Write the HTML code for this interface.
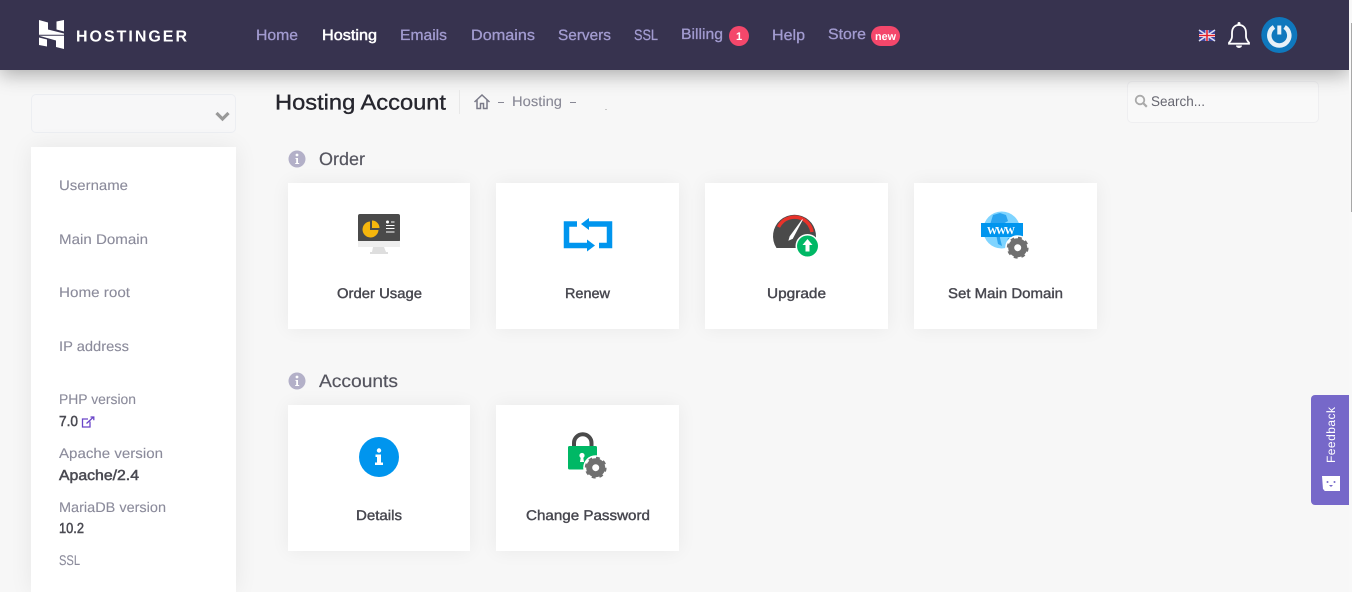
<!DOCTYPE html>
<html lang="en"><head><meta charset="utf-8"><title>Hosting Account</title>
<style>
html,body{margin:0;padding:0;width:1352px;height:592px;overflow:hidden;background:#f7f7f7}
.b{position:absolute;box-sizing:border-box}
.card{background:#fff;box-shadow:0 0 18px rgba(0,0,0,.06)}
svg{position:absolute;left:0;top:0;text-rendering:geometricPrecision}
text{font-family:"Liberation Sans",sans-serif}
.nav{font-size:15px;fill:#a29bd0;stroke:#a29bd0;stroke-width:.3}
.side{font-size:14px;fill:#8b8b9b;stroke:#8b8b9b;stroke-width:.1}
.val{font-size:14.500px;fill:#4a4a52;stroke:#4a4a52;stroke-width:.5}
.lab{font-size:14px;fill:#47474f;stroke:#47474f;stroke-width:.4}
.sec{font-size:18px;fill:#55555f;stroke:#55555f;stroke-width:.2}
</style></head><body>
<div class="b" style="left:31px;top:94px;width:205px;height:39px;border:1px solid #eceef2;border-radius:5px;background:#f7f7f8"></div>
<div class="b card" style="left:31px;top:147px;width:205px;height:445px;box-shadow:0 0 22px rgba(0,0,0,.07)"></div>
<div class="b" style="left:1127px;top:81px;width:192px;height:42px;border:1px solid #efeff1;border-radius:5px;background:#f9f9f9"></div>
<div class="b card" style="left:288px;top:183px;width:182px;height:146px"></div>
<div class="b card" style="left:496px;top:183px;width:183px;height:146px"></div>
<div class="b card" style="left:705px;top:183px;width:183px;height:146px"></div>
<div class="b card" style="left:914px;top:183px;width:183px;height:146px"></div>
<div class="b card" style="left:288px;top:405px;width:182px;height:146px"></div>
<div class="b card" style="left:496px;top:405px;width:183px;height:146px"></div>
<div class="b" style="left:0;top:0;width:1349px;height:70px;background:#37334f;box-shadow:0 5px 18px rgba(0,0,0,.3)"></div>
<div class="b" style="left:1349px;top:0;width:3px;height:592px;background:#f8f8f8"></div>
<div class="b" style="left:1351px;top:23px;width:1px;height:189px;background:#a8a8a8"></div>
<div class="b" style="left:1311px;top:395px;width:38px;height:110px;background:#7668c9;border-radius:4px 0 0 4px"></div>

<svg width="1352" height="592" viewBox="0 0 1352 592" xmlns="http://www.w3.org/2000/svg">
<defs>
<g id="gear"><circle r="6.500" fill="none" stroke="#707070" stroke-width="6"/><circle r="9.600" fill="none" stroke="#707070" stroke-width="2.600" stroke-dasharray="3.770 3.770"/></g>
</defs>
<!-- logo -->
<g fill="#fff">
<polygon points="39,20 48,22.500 48,29.500 64,33.500 64,34.700 39,34.700"/>
<polygon points="56.500,21.500 64,20 64,31.500 56.500,29.500"/>
<polygon points="39,37.500 47,39.500 47,46.500 39,45"/>
<polygon points="39,35.800 64,35.800 64,49 56,47 56,40.500"/>
</g>
<text x="76" y="41.300" font-size="16" font-weight="700" fill="#fff" textLength="111" lengthAdjust="spacing">HOSTINGER</text>
<!-- nav -->
<text class="nav" x="256" y="40" textLength="42" lengthAdjust="spacingAndGlyphs">Home</text>
<text class="nav" x="322" y="40" textLength="55" lengthAdjust="spacingAndGlyphs" style="fill:#fff;stroke:#fff;stroke-width:.5">Hosting</text>
<text class="nav" x="400" y="40" textLength="47" lengthAdjust="spacingAndGlyphs">Emails</text>
<text class="nav" x="471" y="40" textLength="64" lengthAdjust="spacingAndGlyphs">Domains</text>
<text class="nav" x="558" y="40" textLength="53" lengthAdjust="spacingAndGlyphs">Servers</text>
<text class="nav" x="634" y="40" textLength="24" lengthAdjust="spacingAndGlyphs">SSL</text>
<text class="nav" x="681" y="39" textLength="42" lengthAdjust="spacingAndGlyphs">Billing</text>
<circle cx="739" cy="36" r="10" fill="#f4476b"/>
<text x="739" y="40" font-size="11" font-weight="700" fill="#fff" text-anchor="middle">1</text>
<text class="nav" x="772" y="40" textLength="33" lengthAdjust="spacingAndGlyphs">Help</text>
<text class="nav" x="828" y="39" textLength="38" lengthAdjust="spacingAndGlyphs">Store</text>
<rect x="871" y="26" width="29" height="20" rx="10" fill="#f4476b"/>
<text x="875" y="40" font-size="11" font-weight="700" fill="#fff" textLength="21" lengthAdjust="spacingAndGlyphs">new</text>
<!-- flag -->
<rect x="1199" y="30" width="16" height="11" fill="#3f46a0"/>
<path d="M1199 30l16 11M1215 30l-16 11" stroke="#dfe0f2" stroke-width="1.600"/>
<path d="M1207 30v11M1199 35.500h16" stroke="#fff" stroke-width="3"/>
<path d="M1207 30v11M1199 35.500h16" stroke="#e0202c" stroke-width="1.600"/>
<!-- bell -->
<path d="M1239 25c-4.800 0-7 3.600-7 8v3.500c0 3-1.700 4.700-3 6.200v1h20v-1c-1.300-1.500-3-3.200-3-6.200v-3.500c0-4.400-2.200-8-7-8z" fill="none" stroke="#fff" stroke-width="1.800"/>
<circle cx="1239" cy="23.500" r="1.500" fill="#fff"/>
<path d="M1236 45.500a3 2.500 0 0 0 6 0z" fill="#fff"/>
<!-- avatar -->
<circle cx="1279.300" cy="35" r="18" fill="#0f78bd"/>
<path d="M1274 27a10 10 0 1 0 10.600 0" fill="none" stroke="#e8f1f7" stroke-width="4.500"/>
<path d="M1279.300 25.500v9" stroke="#e8f1f7" stroke-width="4"/>
<!-- select chevron -->
<path d="M216.500 113l6 6 6-6" fill="none" stroke="#999" stroke-width="3.200"/>
<!-- sidebar -->
<text class="side" x="59" y="190" textLength="69" lengthAdjust="spacingAndGlyphs">Username</text>
<text class="side" x="59" y="244" textLength="89" lengthAdjust="spacingAndGlyphs">Main Domain</text>
<text class="side" x="59" y="297" textLength="71" lengthAdjust="spacingAndGlyphs">Home root</text>
<text class="side" x="59" y="351" textLength="70" lengthAdjust="spacingAndGlyphs">IP address</text>
<text class="side" x="59" y="404" textLength="77" lengthAdjust="spacingAndGlyphs">PHP version</text>
<text class="val" x="59" y="426" textLength="19" lengthAdjust="spacingAndGlyphs">7.0</text>
<path d="M90 421.500v5.500h-7.500v-8h5.500" fill="none" stroke="#6a45c8" stroke-width="1.300"/>
<path d="M86.500 423.500l7-6.500M90.500 417h3.300v3.300" fill="none" stroke="#6a45c8" stroke-width="1.300"/>
<text class="side" x="59" y="458" textLength="104" lengthAdjust="spacingAndGlyphs">Apache version</text>
<text class="val" x="59" y="480" textLength="80" lengthAdjust="spacingAndGlyphs">Apache/2.4</text>
<text class="side" x="59" y="512" textLength="107" lengthAdjust="spacingAndGlyphs">MariaDB version</text>
<text class="val" x="59" y="533" textLength="25" lengthAdjust="spacingAndGlyphs">10.2</text>
<text class="side" x="59" y="565" textLength="21" lengthAdjust="spacingAndGlyphs">SSL</text>
<!-- title -->
<text x="275" y="109.500" font-size="21.500" fill="#26262e" stroke="#26262e" stroke-width=".35" textLength="171" lengthAdjust="spacingAndGlyphs">Hosting Account</text>
<rect x="459" y="90" width="1" height="24" fill="#e8e8e8"/>
<path d="M474.500 102l7.500-7 7.500 7M477 100v8.500h3.500v-5h3v5h3.500v-8.500" fill="none" stroke="#7a7a88" stroke-width="1.500"/>
<rect x="498" y="102" width="6" height="1" fill="#888895"/>
<text x="512" y="106" font-size="14" fill="#888895" stroke="#888895" stroke-width=".1" textLength="50" lengthAdjust="spacingAndGlyphs">Hosting</text>
<rect x="570" y="102" width="6" height="1" fill="#888895"/>
<rect x="605" y="109" width="2" height="1" fill="#c8c8c8"/>
<!-- search -->
<circle cx="1140" cy="100" r="4.300" fill="none" stroke="#aaa" stroke-width="1.800"/>
<path d="M1143.200 103.200l3.600 3.600" stroke="#aaa" stroke-width="2.200"/>
<text x="1151" y="106" font-size="14" fill="#666670" textLength="54" lengthAdjust="spacingAndGlyphs">Search...</text>
<!-- sections -->
<circle cx="297" cy="159" r="8.500" fill="#b3b0c8"/>
<circle cx="297" cy="155" r="1.400" fill="#fff"/><path d="M295.500 158h2.500v5h1.200v1h-4v-1h1v-4h-.7z" fill="#fff"/>
<text class="sec" x="319" y="165" textLength="46" lengthAdjust="spacingAndGlyphs">Order</text>
<circle cx="297" cy="381" r="8.500" fill="#b3b0c8"/>
<circle cx="297" cy="377" r="1.400" fill="#fff"/><path d="M295.500 380h2.500v5h1.200v1h-4v-1h1v-4h-.7z" fill="#fff"/>
<text class="sec" x="319" y="387" textLength="79" lengthAdjust="spacingAndGlyphs">Accounts</text>
<!-- card labels -->
<text class="lab" x="337" y="298" textLength="85" lengthAdjust="spacingAndGlyphs">Order Usage</text>
<text class="lab" x="565" y="298" textLength="45" lengthAdjust="spacingAndGlyphs">Renew</text>
<text class="lab" x="767" y="298" textLength="59" lengthAdjust="spacingAndGlyphs">Upgrade</text>
<text class="lab" x="948" y="298" textLength="115" lengthAdjust="spacingAndGlyphs">Set Main Domain</text>
<text class="lab" x="356" y="520" textLength="46" lengthAdjust="spacingAndGlyphs">Details</text>
<text class="lab" x="526" y="520" textLength="124" lengthAdjust="spacingAndGlyphs">Change Password</text>
<!-- order usage icon -->
<rect x="358" y="214" width="42" height="28" rx="2" fill="#4a4a4a"/>
<rect x="358" y="241" width="42" height="6" fill="#eeeeee"/>
<path d="M373 247h11l2 5h2v2h-18v-2h2z" fill="#dedede"/>
<path d="M370 221.500a8 8 0 1 0 8.500 8.500h-8.500z" fill="#f5b60d"/>
<path d="M372 220.500a7.500 7.500 0 0 1 7.500 7.500h-7.500z" fill="#f5b60d"/>
<circle cx="387.500" cy="222" r="1.500" fill="#fff"/>
<path d="M391 222h3.500M386 225.500h8.500M386 228.500h8.500M386 232h8.500" stroke="#fff" stroke-width="1"/>
<!-- renew icon -->
<path d="M589 224h20.500v21.500h-10.500" fill="none" stroke="#0095ee" stroke-width="5.500"/>
<polygon points="581,224 589,218 589,230" fill="#0095ee"/>
<path d="M577 224h-10.500v21.500h20.500" fill="none" stroke="#0095ee" stroke-width="5.500"/>
<polygon points="595,245.500 587,239.500 587,251.500" fill="#0095ee"/>
<!-- upgrade icon -->
<path d="M776.500 248a21.500 21.500 0 1 1 36 0z" fill="#4a4a4a"/>
<path d="M778.500 227a18 18 0 0 1 25-7.500 18 18 0 0 1 8.500 12.500" fill="none" stroke="#e8322a" stroke-width="3.500"/>
<path d="M802.500 219.500l-12.500 17-1 3.500 3.500-1.500z" fill="#fff" stroke="#fff" stroke-width=".8"/>
<circle cx="807.500" cy="246" r="12" fill="#fff"/>
<circle cx="807.500" cy="246" r="10.500" fill="#00b865"/>
<path d="M807.500 239l5 6h-3v6.500h-4v-6.500h-3z" fill="#fff"/>
<!-- domain icon -->
<circle cx="1001.700" cy="230" r="18.500" fill="#7fd4ff"/>
<path d="M993 215l7-2 6 2 2 6-7 4-1 13 2 8-4-2-2-10-7-6z" fill="#2aa4f0"/>
<path d="M1008 238l5 1-2 5-4-2z" fill="#2aa4f0"/>
<rect x="981" y="223" width="42" height="14" fill="#0095ee"/>
<text x="987" y="234" font-size="10.500" font-weight="700" fill="#fff" textLength="28" lengthAdjust="spacing" style="font-family:'Liberation Serif',serif">WWW</text>
<circle cx="1017.700" cy="247.700" r="12.500" fill="#fff"/>
<use href="#gear" x="1017.700" y="247.700"/>
<!-- details icon -->
<circle cx="379" cy="457" r="20" fill="#0095ee"/>
<circle cx="379" cy="450.500" r="2.200" fill="#fff"/>
<path d="M375.500 454.500h5.500v8h2v2.500h-8v-2.500h2v-5.500h-1.500z" fill="#fff"/>
<!-- lock icon -->
<path d="M574 448v-5a8.700 8.700 0 0 1 17.500 0v5" fill="none" stroke="#4a4a4a" stroke-width="4"/>
<rect x="568" y="446" width="29" height="23.500" rx="1.500" fill="#00b865"/>
<circle cx="582" cy="455.500" r="2.600" fill="#fff"/><path d="M581 456h2l1 6h-4z" fill="#fff"/>
<circle cx="595.700" cy="467.700" r="12.500" fill="#fff"/>
<use href="#gear" x="595.700" y="467.700"/>
<!-- feedback -->
<text transform="translate(1335 463) rotate(-90)" font-size="12" fill="#fff" textLength="56" lengthAdjust="spacing">Feedback</text>
<path d="M1322 476h18v15h-15.500l-.5-1.500-1 0z" fill="#fff"/>
<circle cx="1327.500" cy="482" r="1" fill="#7668c9"/><circle cx="1334.500" cy="482" r="1" fill="#7668c9"/>
<path d="M1329 485h4l-2 2z" fill="#7668c9"/>
</svg>
</body></html>
